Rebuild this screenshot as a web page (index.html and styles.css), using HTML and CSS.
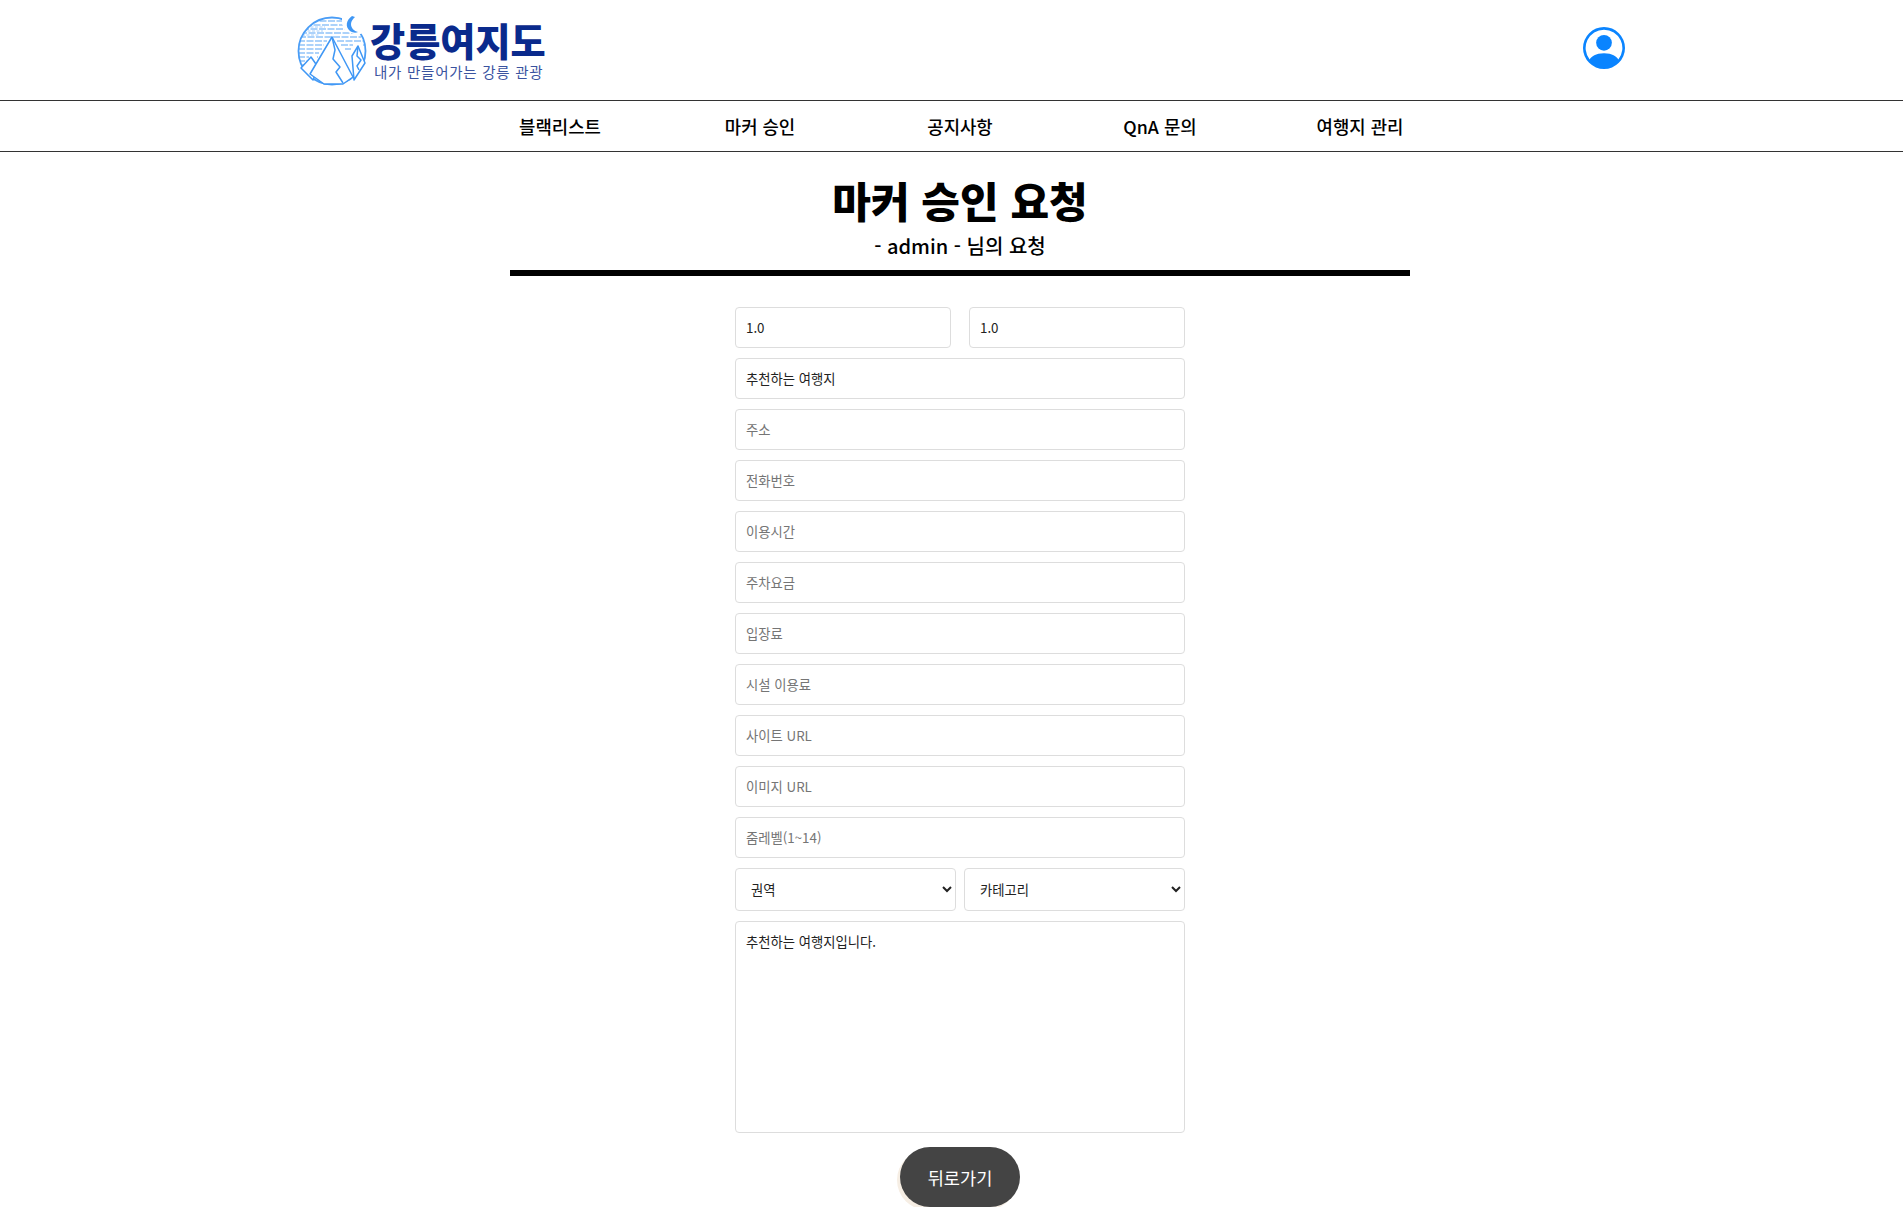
FILE: index.html
```html
<!DOCTYPE html>
<html lang="ko">
<head>
<meta charset="utf-8">
<title>마커 승인 요청</title>
<link rel="stylesheet" href="styles.css">
</head>
<body>
<div class="page">
  <header class="top">
    <a class="logo" href="#">
      <svg class="logo-mark" viewBox="0 0 70 70" width="70" height="70" aria-hidden="true">
        <defs><clipPath id="disc"><circle cx="35" cy="35" r="33.5"/></clipPath></defs>
        <g clip-path="url(#disc)" fill="none" stroke="#5aa6f5" stroke-width="1.2">
          <path stroke-dasharray="7 1.5" d="M14 5H50M8 9H50M5 13H58M3 17H62M2 21H64M1 25H30M40 25H66M1 29H27M44 29H56M66 29H69M1 33H25M48 33H54M1 37H22M1 41H12M20 41H21M1 45H10M1 49H7"/>
          <path stroke-dasharray="3 1.5" stroke="#a8cff9" d="M9 11H28M6 15H26M5 19H22"/>
          <path stroke-dasharray="7 1.5" d="M62 45H69M64 50H69"/>
        </g>
        <circle cx="35" cy="35" r="33.5" fill="none" stroke="#4a9df6" stroke-width="1.8"/>
        <path d="M45 0H70V16L60 19L48 15L45 8Z" fill="#fff"/>
        <path d="M55 0C49 4 48 11 53 15C56 17 59 17 61 16C57 15 54 12 54 8C54 5 56 3 58 1Z" fill="#3f97f5"/>
        <g fill="#fff" stroke="#3f97f5" stroke-width="1.5" stroke-linejoin="round">
          <path d="M55 40L61 30L68 47L57 64Z"/>
          <path d="M4 52L14 41L21 51L16 64Z"/>
          <path d="M13 58L35 21L56 61L46 68H27Z"/>
        </g>
        <path d="M35 21L38 34L36 43L43 51L39 56L46 67M61 30L60 40L64 44L60 50L62 54" fill="none" stroke="#3f97f5" stroke-width="1.5" stroke-linejoin="round"/>
      </svg>
      <span class="logo-text">
        <span class="logo-name">강릉여지도</span>
        <span class="logo-sub">내가 만들어가는 강릉 관광</span>
      </span>
    </a>
    <a class="user" href="#" aria-label="내 정보">
      <svg viewBox="0 0 16 16" width="42" height="42" fill="#0a84ff" aria-hidden="true">
        <path d="M11 6a3 3 0 1 1-6 0 3 3 0 0 1 6 0z"/>
        <path fill-rule="evenodd" d="M0 8a8 8 0 1 1 16 0A8 8 0 0 1 0 8zm8-7a7 7 0 0 0-5.468 11.37C3.242 11.226 4.805 10 8 10s4.757 1.225 5.468 2.37A7 7 0 0 0 8 1z"/>
      </svg>
    </a>
  </header>
  <nav class="menu">
    <a href="#">블랙리스트</a>
    <a href="#">마커 승인</a>
    <a href="#">공지사항</a>
    <a href="#">QnA 문의</a>
    <a href="#">여행지 관리</a>
  </nav>
  <main class="content">
    <div class="heading">
      <h1>마커 승인 요청</h1>
      <p>- admin - 님의 요청</p>
    </div>
    <form class="form">
      <div class="row coords">
        <input class="field" type="text" value="1.0">
        <input class="field" type="text" value="1.0">
      </div>
      <input class="field" type="text" value="추천하는 여행지">
      <input class="field" type="text" placeholder="주소">
      <input class="field" type="text" placeholder="전화번호">
      <input class="field" type="text" placeholder="이용시간">
      <input class="field" type="text" placeholder="주차요금">
      <input class="field" type="text" placeholder="입장료">
      <input class="field" type="text" placeholder="시설 이용료">
      <input class="field" type="text" placeholder="사이트 URL">
      <input class="field" type="text" placeholder="이미지 URL">
      <input class="field" type="text" placeholder="줌레벨(1~14)">
      <div class="row selects">
        <select class="field pick"><option>권역</option></select>
        <select class="field pick"><option>카테고리</option></select>
      </div>
      <textarea class="field memo">추천하는 여행지입니다.</textarea>
      <button class="back" type="button">뒤로가기</button>
    </form>
  </main>
</div>
</body>
</html>
```
FILE: styles.css
```css
html, body {
  margin: 0;
  padding: 0;
  height: 100%;
  overflow: hidden;
  background: #fff;
}
body, input, select, textarea, button {
  font-family: "Noto Sans CJK KR", "Noto Sans", sans-serif;
}
a { color: inherit; text-decoration: none; }

.page { width: 1920px; color: #000; }

.top {
  height: 100px;
  display: flex;
  align-items: center;
  justify-content: space-between;
  padding: 0 295px 0 297px;
  border-bottom: 1px solid #333;
}
.logo { display: flex; align-items: center; gap: 3px; margin-top: 2px; }
.logo-mark { display: block; flex: none; }
.logo-text { display: flex; flex-direction: column; gap: 5px; margin-top: 0; }
.logo-name {
  font-size: 38.2px;
  line-height: 36px;
  font-weight: 900;
  color: #0a2a8c;
}
.logo-sub {
  font-size: 14.5px;
  line-height: 17px;
  color: #3a539f;
  padding-left: 4px;
  letter-spacing: 0.75px;
}
.user { display: block; height: 42px; margin-top: -4px; }
.user svg { display: block; }

.menu {
  display: flex;
  justify-content: center;
  height: 50px;
  border-bottom: 1px solid #333;
}
.menu a {
  width: 200px;
  text-align: center;
  font-size: 17.8px;
  font-weight: 500;
  line-height: 50px;
}

.content { width: 900px; margin: 0 auto; }
.heading {
  text-align: center;
  border-bottom: 6px solid #000;
  padding-bottom: 8px;
}
.heading h1 {
  margin: 0 0 2px;
  padding-top: 20px;
  font-size: 42px;
  line-height: 56px;
  font-weight: 900;
}
.heading p {
  margin: 0;
  font-size: 20px;
  line-height: 32px;
  font-weight: 500;
}

.form {
  width: 450px;
  margin: 31px auto 0;
  display: flex;
  flex-direction: column;
  gap: 10px;
}
.row { display: flex; justify-content: space-between; }
.field {
  box-sizing: border-box;
  height: 41px;
  padding: 0 10px;
  border: 1px solid #ddd;
  border-radius: 4px;
  background: #fff;
  font-size: 13.33px;
  color: #222;
  outline: none;
}
.form > .field { width: 100%; }
.field::placeholder { color: #757575; }
.coords .field { width: 216px; }
.selects .field { width: 221px; height: 43px; padding: 0 11px; }
.memo {
  display: block;
  height: 212px;
  padding: 11px 10px;
  resize: none;
  line-height: 18px;
}
.back {
  align-self: center;
  width: 120px;
  height: 60px;
  margin-top: 4px;
  flex: none;
  border: 0;
  border-radius: 30px;
  background: #444;
  color: #fff;
  font-size: 17.6px;
  box-shadow: -3px 3px 0 #f6eee4;
}
```
